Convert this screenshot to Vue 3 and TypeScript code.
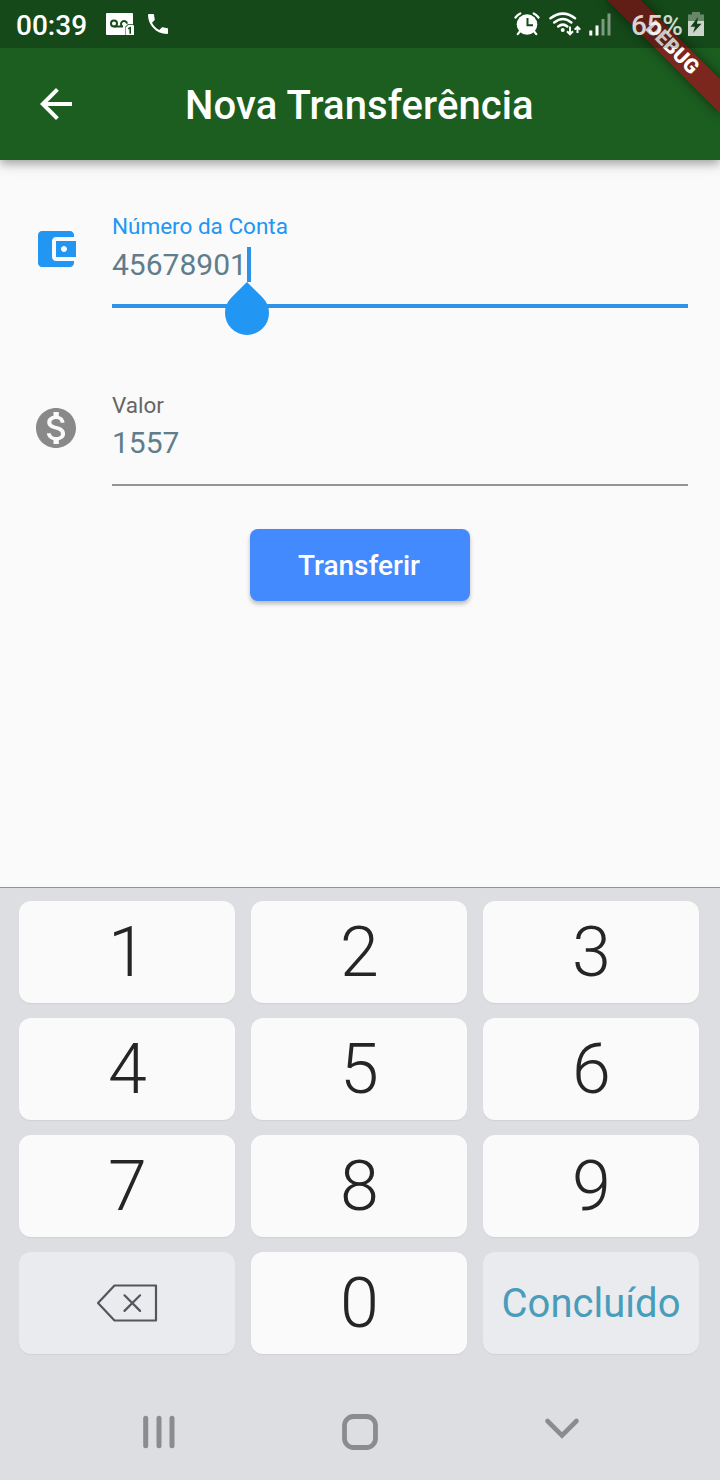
<script setup lang="ts">
const digits: string[] = ['1', '2', '3', '4', '5', '6', '7', '8', '9']
</script>

<template>
  <div class="screen">
    <header class="header">
      <div class="status">
        <span class="clock">00:39</span>
        <svg class="voicemail" width="28" height="24" viewBox="0 0 28 24">
          <path fill="#fff" d="M1 1h25q1 0 1 1v10h-5l-3 3v8H1q-1 0-1-1V2q0-1 1-1z" />
          <g fill="none" stroke="#164a1b" stroke-width="2">
            <circle cx="8" cy="11.500" r="3" />
            <path d="M8 14.500h9" />
            <path d="M16 14.200a3 3 0 1 1 5-2.500" />
          </g>
          <path fill="#fff" d="M22.500 12.700H27l1 1V23h-8.500v-7.500z" />
          <path fill="none" stroke="#164a1b" stroke-width="1.600" d="M22.200 16.700l2-1v6" />
        </svg>
        <svg class="phone" width="20" height="20" viewBox="3 3 18 18">
          <path fill="#fff" d="M6.620 10.790c1.440 2.830 3.760 5.140 6.590 6.590l2.200-2.200c.27-.27.67-.36 1.020-.24 1.120.37 2.330.57 3.570.57.55 0 1 .45 1 1V20c0 .55-.45 1-1 1-9.390 0-17-7.610-17-17 0-.55.45-1 1-1h3.500c.55 0 1 .45 1 1 0 1.250.2 2.450.57 3.570.11.35.03.74-.25 1.020l-2.200 2.200z" />
        </svg>
        <div class="spacer"></div>
        <svg class="alarm" width="26" height="24" viewBox="0 0 26 24">
          <circle cx="13" cy="12.500" r="10.300" fill="#fff" />
          <g fill="none" stroke="#fff" stroke-linecap="round" stroke-width="2.200">
            <path d="M1.500 5.500Q3.500 2.700 6.300 1.400M24.500 5.500Q22.500 2.700 19.700 1.400M5.800 19.500l-2 2.600M20.200 19.500l2 2.600" />
          </g>
          <path d="M13.500 6v7.300h5.500" fill="none" stroke="#164a1b" stroke-width="2" />
        </svg>
        <svg class="wifi" width="32" height="24" viewBox="0 0 32 24">
          <g fill="none" stroke="#fff" stroke-width="2.500" stroke-linecap="round">
            <path d="M1.500 6.200Q14 -3 26 6.200M5.200 10.500Q14 3.500 22.300 10.500M9.200 14.500Q14 10.800 18.300 14.500" />
          </g>
          <circle cx="13.700" cy="18" r="2" fill="#fff" />
          <g fill="none" stroke="#fff" stroke-width="2">
            <path d="M21 14.500v8M18 19.300l3 3 3-3M28.500 21v-6.500M25.700 17.600l2.800-2.800 2.800 2.800" />
          </g>
        </svg>
        <svg class="signal" width="22" height="24" viewBox="0 0 22 24">
          <path fill="#fff" d="M.3 18.500h3v5h-3zM6.500 13.500h3v10h-3z" />
          <path fill="#fff" fill-opacity=".45" d="M12.500 7h3v16.500h-3zM18.500 1.500h3v22h-3z" />
        </svg>
        <span class="percent">65%</span>
        <svg class="battery" width="16" height="24" viewBox="0 0 16 24">
          <path fill="#fff" fill-opacity=".35" d="M4 0h8v2.500h4V9H0V2.500h4z" />
          <path fill="#cbd5cc" d="M0 9h16v15H0z" />
          <path fill="#123f17" d="M10 5L2.500 14.800h4.500L5 21l8.500-9.200H9z" />
        </svg>
      </div>
      <div class="appbar">
        <svg width="48" height="48" viewBox="0 0 24 24">
          <path fill="#fff" d="M20 11H7.830l5.590-5.590L12 4l-8 8 8 8 1.410-1.410L7.830 13H20v-2z" />
        </svg>
        <h1>Nova Transferência</h1>
      </div>
      <div class="ribbon"><div class="ribbon-band">DEBUG</div></div>
    </header>

    <main class="form">
      <div class="row">
        <svg width="48" height="48" viewBox="0 0 24 24">
          <path fill="#2196f3" d="M21 18v1c0 1.100-.9 2-2 2H5c-1.110 0-2-.9-2-2V5c0-1.100.89-2 2-2h14c1.100 0 2 .9 2 2v1h-9c-1.110 0-2 .9-2 2v8c0 1.100.89 2 2 2h9zm-9-2h10V8H12v8zm4-2.500c-.83 0-1.500-.67-1.500-1.500s.67-1.500 1.500-1.500 1.500.67 1.500 1.500-.67 1.500-1.500 1.500z" />
        </svg>
        <div class="field focused">
          <label>Número da Conta</label>
          <div class="value">45678901<span class="caret"><i class="handle"></i></span></div>
        </div>
      </div>
      <div class="row">
        <svg width="48" height="48" viewBox="0 0 24 24">
          <path fill="#898989" d="M12 2C6.480 2 2 6.480 2 12s4.480 10 10 10 10-4.480 10-10S17.520 2 12 2zm1.410 16.090V20h-2.670v-1.930c-1.710-.36-3.160-1.460-3.270-3.400h1.960c.1 1.050.82 1.870 2.650 1.870 1.960 0 2.400-.98 2.400-1.590 0-.83-.44-1.610-2.670-2.140-2.480-.6-4.180-1.620-4.180-3.670 0-1.720 1.390-2.840 3.110-3.210V4h2.670v1.950c1.860.45 2.790 1.860 2.850 3.390H14.300c-.05-1.110-.64-1.870-2.220-1.870-1.500 0-2.400.68-2.400 1.640 0 .84.65 1.390 2.670 1.910s4.180 1.390 4.180 3.910c-.01 1.830-1.380 2.830-3.120 3.160z" />
        </svg>
        <div class="field">
          <label>Valor</label>
          <div class="value amount">1557</div>
        </div>
      </div>
      <button class="submit">Transferir</button>
    </main>

    <section class="keyboard">
      <div class="keys">
        <div v-for="d in digits" :key="d" class="key">{{ d }}</div>
        <div class="key soft">
          <svg width="62" height="40" viewBox="0 0 62 40">
            <g fill="none" stroke="#55565b" stroke-width="2.200" stroke-linejoin="round" stroke-linecap="round">
              <path d="M2 20L18.500 2.500h41.500v35H18.500z" />
              <path d="M28.500 12.300l15.600 15.600M44.100 12.300L28.500 27.900" />
            </g>
          </svg>
        </div>
        <div class="key">0</div>
        <div class="key soft done">Concluído</div>
      </div>
      <nav class="nav">
        <svg width="36" height="36" viewBox="0 0 36 36">
          <path d="M4.700 4.300v27.400M18 4.300v27.400M31 4.300v27.400" fill="none" stroke="#8b8c8f" stroke-width="5" stroke-linecap="round" />
        </svg>
        <svg class="home" width="36" height="36" viewBox="0 0 36 36">
          <rect x="2.500" y="2.500" width="31" height="31" rx="9" fill="none" stroke="#8b8c8f" stroke-width="4.800" />
        </svg>
        <svg width="36" height="36" viewBox="0 0 36 36">
          <path d="M3.500 7L18 21.500 32.500 7" fill="none" stroke="#8b8c8f" stroke-width="4.600" stroke-linecap="round" />
        </svg>
      </nav>
    </section>
  </div>
</template>

<style>
body {
  margin: 0;
}
</style>

<style scoped>
.screen {
  width: 720px;
  height: 1480px;
  display: flex;
  flex-direction: column;
  background: #fafafa;
  font-family: Roboto, sans-serif;
  overflow: hidden;
}
svg {
  display: block;
  flex: none;
}
.header {
  position: relative;
  flex: none;
  height: 160px;
  background: #1b5e20;
  box-shadow: 0 4px 8px rgba(0, 0, 0, 0.2), 0 3px 14px rgba(0, 0, 0, 0.2);
}
.status {
  position: relative;
  z-index: 2;
  box-sizing: border-box;
  height: 48px;
  padding: 0 16px;
  display: flex;
  align-items: center;
  background: rgba(0, 0, 0, 0.22);
  color: #fff;
  font-size: 28px;
  font-weight: 500;
}
.clock {
  width: 90px;
  padding-top: 2px;
}
.phone {
  margin-left: 14px;
}
.spacer {
  flex: 1;
}
.wifi {
  margin-left: 9px;
}
.signal {
  margin-left: 8px;
}
.percent {
  width: 57px;
  margin-left: 20px;
  padding-top: 2px;
  letter-spacing: -0.3px;
  opacity: 0.8;
}
.appbar {
  display: flex;
  align-items: center;
  height: 112px;
  padding-left: 32px;
}
h1 {
  margin: 2px 0 0 105px;
  color: #fff;
  font-size: 40px;
  font-weight: 500;
  letter-spacing: 0.1px;
  white-space: nowrap;
}
.ribbon {
  position: absolute;
  z-index: 1;
  top: 0;
  right: 0;
  width: 160px;
  height: 160px;
  overflow: hidden;
}
.ribbon-band {
  position: absolute;
  top: 56px;
  left: 80px;
  width: 160px;
  height: 24px;
  line-height: 23px;
  transform-origin: 80px -56px;
  transform: rotate(45deg);
  background: #7b271d;
  box-shadow: 0 0 12px rgba(0, 0, 0, 0.5);
  color: #fff;
  font-size: 20.4px;
  font-weight: 900;
  text-align: center;
}
.form {
  flex: 1;
  padding: 48px 32px 0;
  display: flex;
  flex-direction: column;
}
.row {
  display: flex;
  gap: 32px;
  height: 179px;
}
.row > svg {
  margin-top: 17px;
}
.field {
  flex: 1;
  box-sizing: border-box;
  height: 99px;
  padding-top: 5px;
  border-bottom: 2px solid #949494;
}
label {
  display: block;
  font-size: 22.5px;
  line-height: 27px;
  color: #666;
}
.value {
  display: flex;
  align-items: center;
  margin-top: 7px;
  height: 35px;
  font-size: 30px;
  color: #607d8b;
}
.amount {
  margin-top: 6px;
}
.focused {
  height: 100px;
  border-bottom: 4px solid #2e93e6;
}
.focused label {
  color: #2196f3;
}
.caret {
  position: relative;
  width: 4px;
  height: 35px;
  background: #2e93e6;
}
.handle {
  position: absolute;
  left: -22px;
  top: 44px;
  width: 44px;
  height: 44px;
  border-radius: 0 50% 50% 50%;
  background: #2196f3;
  transform: rotate(45deg);
}
.submit {
  align-self: center;
  width: 220px;
  height: 72px;
  margin-top: -37px;
  padding: 0 2px 0 0;
  border: 0;
  border-radius: 8px;
  background: #448aff;
  box-shadow: 0 3px 4px rgba(0, 0, 0, 0.25);
  color: #fff;
  font: 500 28px Roboto, sans-serif;
}
.keyboard {
  box-sizing: border-box;
  flex: none;
  height: 593px;
  border-top: 1px solid #929397;
  background: #dddee2;
  padding: 13px 21px 0 19px;
}
.keys {
  display: grid;
  grid-template-columns: repeat(3, 216px);
  grid-auto-rows: 102px;
  gap: 15px 16px;
}
.key {
  box-sizing: border-box;
  display: flex;
  align-items: center;
  justify-content: center;
  padding-left: 1px;
  border-radius: 12px;
  background: #fafafa;
  box-shadow: 0 1px 1px #d0d1d5;
  color: #252525;
  font-size: 70px;
  font-weight: 300;
}
.soft {
  padding-left: 0;
  background: #e9ebef;
}
.done {
  color: #4a9dba;
  font-size: 40px;
  font-weight: 400;
}
.nav {
  display: flex;
  justify-content: space-between;
  padding: 60px 119px 0 122px;
}
.home {
  margin-right: 2px;
}
</style>
